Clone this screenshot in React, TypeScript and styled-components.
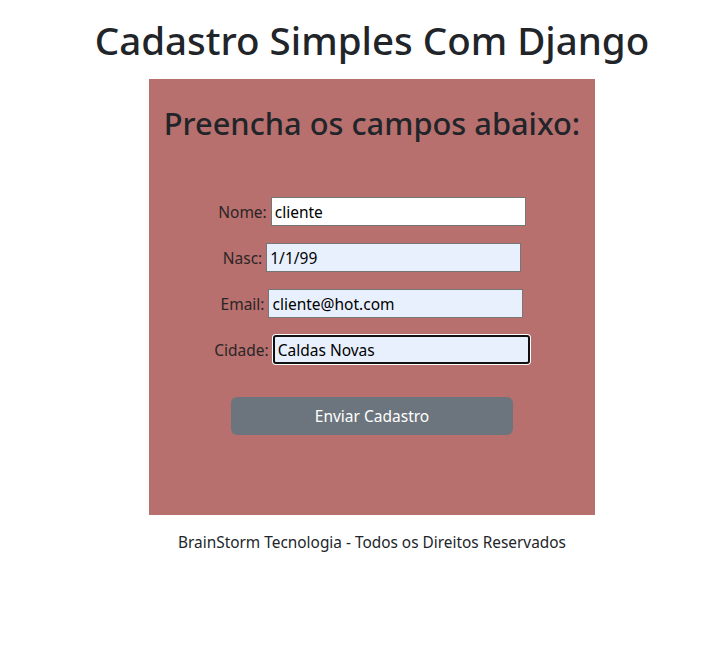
import React from 'react';
import styled, { createGlobalStyle } from 'styled-components';

const GlobalStyle = createGlobalStyle`
  body {
    margin: 0;
    background: #ffffff;
    font-family: "Noto Sans", "Open Sans", sans-serif;
    color: #212529;
  }
`;

const Page = styled.div`
  width: 704px;
  padding-left: 40px;
  box-sizing: border-box;
  display: flex;
  flex-direction: column;
  align-items: center;
`;

const Title = styled.h1`
  font-size: 38.5px;
  font-weight: 500;
  line-height: 48px;
  margin: 16px 0 15px;
`;

const Card = styled.div`
  width: 446px;
  height: 436px;
  box-sizing: border-box;
  background: #b8706e;
  padding-top: 25px;
  display: flex;
  flex-direction: column;
  align-items: center;
`;

const Subtitle = styled.h2`
  font-size: 30.8px;
  font-weight: 500;
  line-height: 38px;
  margin: 0 0 55px;
`;

const Row = styled.div`
  display: flex;
  align-items: center;
  gap: 4px;
  height: 29px;
  margin-bottom: 17px;
  font-size: 15.5px;
`;

const Label = styled.label`
  color: #2a2526;
`;

const Input = styled.input<{ $filled?: boolean; $focused?: boolean }>`
  width: ${(p) => (p.$focused ? '257px' : '255px')};
  height: 29px;
  box-sizing: border-box;
  font-family: inherit;
  font-size: 15.5px;
  color: #000;
  padding: 0 3px;
  background: ${(p) => (p.$filled ? '#e8f0fe' : '#ffffff')};
  border: 1px solid #767676;
  border-radius: 0;
  outline: none;
  ${(p) => p.$focused && 'border: 2px solid #101010; border-radius: 3px; box-shadow: 0 0 0 1px #fff;'}
`;

const Button = styled.button`
  margin-top: 16px;
  width: 282px;
  height: 38px;
  border: none;
  border-radius: 6px;
  background: #6c757d;
  color: #ffffff;
  font-family: inherit;
  font-size: 15.5px;
`;

const Footer = styled.p`
  margin: 16px 0 0;
  font-size: 15.4px;
  line-height: 24px;
`;

const fields = [
  { label: 'Nome:', value: 'cliente', filled: false, focused: false },
  { label: 'Nasc:', value: '1/1/99', filled: true, focused: false },
  { label: 'Email:', value: 'cliente@hot.com', filled: true, focused: false },
  { label: 'Cidade:', value: 'Caldas Novas', filled: true, focused: true },
];

export default function App() {
  return (
    <Page>
      <GlobalStyle />
      <Title>Cadastro Simples Com Django</Title>
      <Card>
        <Subtitle>Preencha os campos abaixo:</Subtitle>
        {fields.map((f) => (
          <Row key={f.label}>
            <Label>{f.label}</Label>
            <Input defaultValue={f.value} $filled={f.filled} $focused={f.focused} />
          </Row>
        ))}
        <Button>Enviar Cadastro</Button>
      </Card>
      <Footer>BrainStorm Tecnologia - Todos os Direitos Reservados</Footer>
    </Page>
  );
}
